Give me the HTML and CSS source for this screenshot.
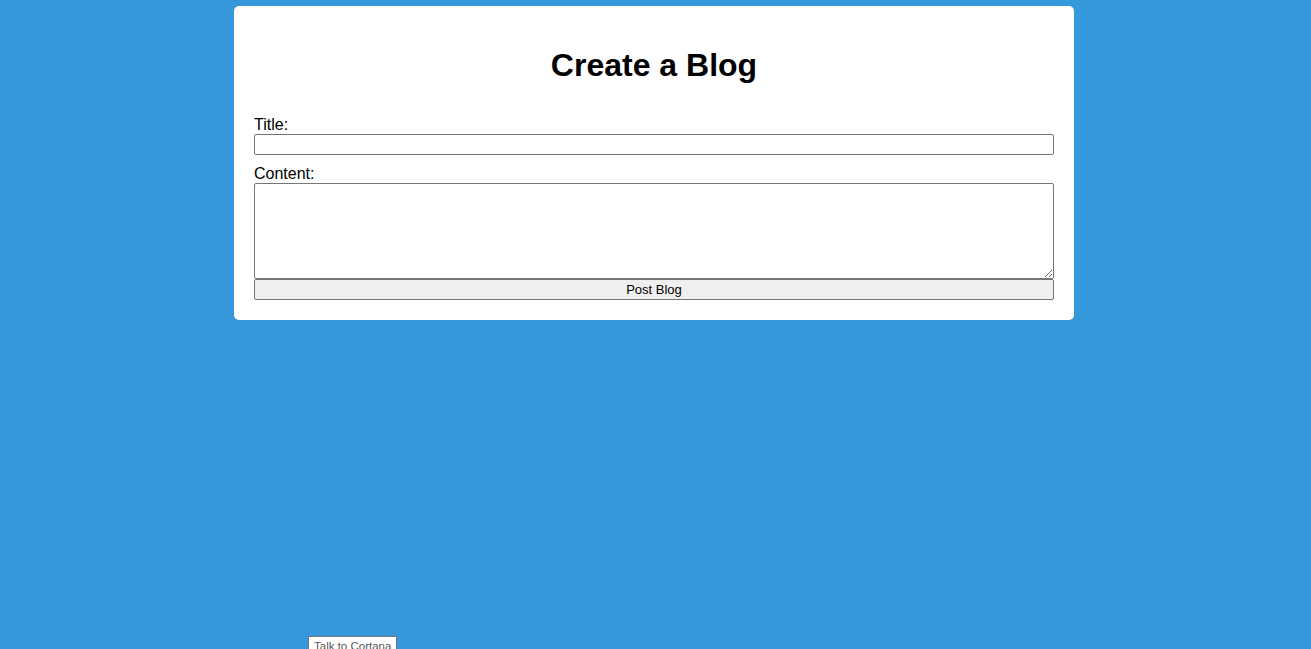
FILE: index.html
```html
<!DOCTYPE html>
<html lang="en">
<head>
<meta charset="utf-8">
<title>Create a Blog</title>
<link rel="stylesheet" href="styles.css">
</head>
<body>
<div class="card">
  <h1 class="title">Create a Blog</h1>
  <form class="form">
    <label class="label" for="title">Title:</label>
    <input class="input" id="title" type="text">
    <label class="label label-gap" for="content">Content:</label>
    <textarea class="textarea" id="content"></textarea>
    <button class="btn" type="button">Post Blog</button>
  </form>
</div>
<div class="tooltip">Talk to Cortana</div>
</body>
</html>
```

FILE: styles.css
```css
html, body {
  margin: 0;
  padding: 0;
  height: 100%;
}
body {
  background: #3498db;
  font-family: "Liberation Sans", Arial, sans-serif;
  color: #000;
  overflow: hidden;
  position: relative;
}
.card {
  width: 800px;
  margin: 6px 0 0 234px;
  padding: 20px;
  background: #fff;
  border-radius: 5px;
}
.title {
  font-size: 32px;
  font-weight: bold;
  text-align: center;
  margin: 21px 0 0;
  line-height: 37px;
}
.form {
  display: flex;
  flex-direction: column;
  margin-top: 32px;
}
.label {
  font-size: 16px;
  line-height: 18px;
  display: block;
}
.label-gap {
  margin-top: 10px;
}
.input {
  box-sizing: border-box;
  width: 800px;
  height: 21px;
  margin: 0;
  border: 1px solid #767676;
  border-radius: 2px;
  padding: 1px 2px;
  font-family: "Liberation Sans", Arial, sans-serif;
  font-size: 13px;
}
.textarea {
  box-sizing: border-box;
  width: 800px;
  height: 96px;
  margin: 0;
  border: 1px solid #767676;
  border-radius: 2px;
  padding: 2px;
  font-family: "Liberation Mono", monospace;
  font-size: 13px;
  display: block;
}
.btn {
  box-sizing: border-box;
  width: 800px;
  height: 21px;
  margin: 0;
  background: #efefef;
  border: 1px solid #767676;
  border-radius: 2px;
  font-family: "Liberation Sans", Arial, sans-serif;
  font-size: 13px;
  color: #000;
  padding: 0;
}
.tooltip {
  position: absolute;
  left: 308px;
  top: 636px;
  padding: 2px 5px 4px;
  background: #fff;
  border: 1px solid #767676;
  font-family: "Liberation Sans", sans-serif;
  font-size: 11.5px;
  color: #575757;
  line-height: 14px;
  white-space: nowrap;
}
```
